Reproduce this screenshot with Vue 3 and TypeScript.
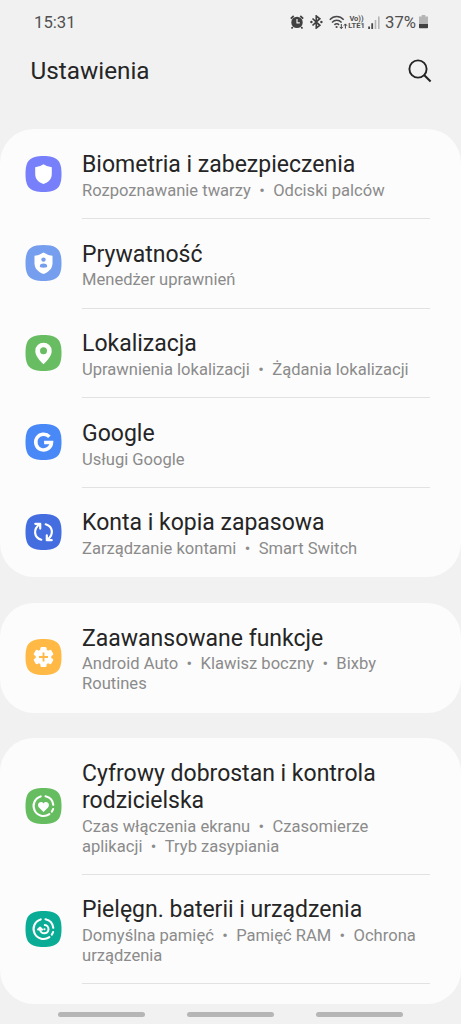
<script setup lang="ts">
type IconName = 'shield' | 'privacy' | 'location' | 'google' | 'sync' | 'advanced' | 'wellbeing' | 'care'

interface SettingsItem {
  icon: IconName
  color: string
  title: string[]
  details: string[][]
}

interface SettingsGroup {
  id: string
  clipped?: boolean
  items: SettingsItem[]
}

const groups: SettingsGroup[] = [
  {
    id: 'security',
    items: [
      { icon: 'shield', color: '#777ffa', title: ['Biometria i zabezpieczenia'], details: [['Rozpoznawanie twarzy', 'Odciski palców']] },
      { icon: 'privacy', color: '#769eee', title: ['Prywatność'], details: [['Menedżer uprawnień']] },
      { icon: 'location', color: '#68bd62', title: ['Lokalizacja'], details: [['Uprawnienia lokalizacji', 'Żądania lokalizacji']] },
      { icon: 'google', color: '#4889f7', title: ['Google'], details: [['Usługi Google']] },
      { icon: 'sync', color: '#446de0', title: ['Konta i kopia zapasowa'], details: [['Zarządzanie kontami', 'Smart Switch']] },
    ],
  },
  {
    id: 'advanced',
    items: [
      { icon: 'advanced', color: '#ffb944', title: ['Zaawansowane funkcje'], details: [['Android Auto', 'Klawisz boczny', 'Bixby'], ['Routines']] },
    ],
  },
  {
    id: 'device',
    clipped: true,
    items: [
      { icon: 'wellbeing', color: '#66bd60', title: ['Cyfrowy dobrostan i kontrola', 'rodzicielska'], details: [['Czas włączenia ekranu', 'Czasomierze'], ['aplikacji', 'Tryb zasypiania']] },
      { icon: 'care', color: '#0bac95', title: ['Pielęgn. baterii i urządzenia'], details: [['Domyślna pamięć', 'Pamięć RAM', 'Ochrona'], ['urządzenia']] },
    ],
  },
]
</script>

<template>
  <main class="screen">
    <header class="status">
      <span class="clock">15:31</span>
      <div class="indicators">
        <svg class="alarm" viewBox="0 0 14 14" width="14" height="14">
          <circle cx="7" cy="7.4" r="5.7" fill="#404040" />
          <path d="M.8 3.6 3.7 1M13.2 3.6 10.3 1M2.8 12l-1.3 1.5M11.2 12l1.3 1.5" stroke="#404040" stroke-width="1.7" />
          <path d="M7 4v3.8h2.8" fill="none" stroke="#f1f1f1" stroke-width="1.2" />
        </svg>
        <svg class="bluetooth" viewBox="0 0 13 14" width="13" height="14">
          <path d="m2.5 3.5 7.3 6.8L6.3 13V1l3.5 2.7-7.3 6.8" fill="none" stroke="#404040" stroke-width="1.7" />
          <circle cx="1.4" cy="7" r="1.2" fill="#404040" />
          <circle cx="11.4" cy="7" r="1.2" fill="#404040" />
        </svg>
        <svg class="wifi" viewBox="0 0 19 15" width="19" height="15">
          <g fill="none" stroke="#484848" stroke-width="1.5">
            <path d="M.8 4.7C4.8.4 10.6.4 14.7 4.7" />
            <path d="M3 7.4c2.9-3 6.8-3 9.6 0" />
            <path d="M5.4 9.9c1.5-1.5 3.2-1.5 4.7 0" />
          </g>
          <circle cx="7.6" cy="12" r="1.1" fill="#484848" />
          <path d="M12.3 9v4.5M10.8 11.9l1.5 1.7 1.5-1.7M16.4 13.5V9m-1.5 1.7 1.5-1.8 1.5 1.8" fill="none" stroke="#404040" stroke-width="1" />
        </svg>
        <div class="volte"><span>Vo))</span><span>LTE1</span></div>
        <svg class="signal" viewBox="0 0 12 13" width="12" height="13">
          <path d="M1.1 10.5v2.5M4.2 7.2V13" stroke="#484848" stroke-width="1.8" />
          <path d="M7.5 4v9M10.8.5V13" stroke="#b4b4b4" stroke-width="1.6" />
        </svg>
        <span class="percent">37%</span>
        <svg class="battery" viewBox="0 0 9 14" width="9" height="14">
          <path d="M2.7 0h3.6v1.5H9v8H0v-8h2.7z" fill="#b5b5b5" />
          <path d="M0 9h9v3.5q0 .8-.8.8H.8q-.8 0-.8-.8z" fill="#404040" />
        </svg>
      </div>
    </header>

    <div class="toolbar">
      <h1>Ustawienia</h1>
      <svg class="search" viewBox="0 0 24 24" width="24" height="24">
        <circle cx="10" cy="10" r="8.6" fill="none" stroke="#242424" stroke-width="1.9" />
        <path d="m16.1 16.1 6.5 6.5" stroke="#242424" stroke-width="2.1" />
      </svg>
    </div>

    <section v-for="group in groups" :key="group.id" class="card" :class="{ clipped: group.clipped }">
      <article v-for="item in group.items" :key="item.icon" class="row">
        <svg class="icon" viewBox="0.5 0 36 36" width="36" height="36">
          <path d="M18 0C31.5 0 36 4.5 36 18S31.5 36 18 36 0 31.5 0 18 4.5 0 18 0Z" :fill="item.color" />
          <path v-if="item.icon === 'shield'" d="M18 8.2q4 2.8 8.3 3V18c0 5.2-3.3 8.3-8.3 10-5-1.7-8.3-4.8-8.3-10v-6.8q4.3-.2 8.3-3Z" fill="#fff" />
          <template v-else-if="item.icon === 'privacy'">
            <path d="M18 7.5q4.5 3 9 3.2v7.5c0 5.2-3.5 8.7-9 10.8-5.5-2.1-9-5.6-9-10.8v-7.5q4.5-.2 9-3.2Z" fill="#fff" />
            <circle cx="18" cy="14.6" r="2.2" :fill="item.color" />
            <path d="M14.4 22v-1.2c0-3.2 7.2-3.2 7.2 0V22q-3.6 1.5-7.2 0Z" :fill="item.color" />
          </template>
          <template v-else-if="item.icon === 'location'">
            <path d="M18 7.7a8.2 8.2 0 0 1 8.2 8.2c0 5.2-4.8 9.8-8.2 13.3-3.4-3.5-8.2-8.1-8.2-13.3A8.2 8.2 0 0 1 18 7.7Z" fill="#fff" />
            <circle cx="18" cy="15.8" r="3.5" :fill="item.color" />
          </template>
          <path v-else-if="item.icon === 'google'" d="M23.9 12.7A7.9 7.9 0 1 0 26 18.4h-7.4" fill="none" stroke="#fff" stroke-width="3.5" />
          <g v-else-if="item.icon === 'sync'" fill="none" stroke="#fff" stroke-width="2.2" stroke-linecap="round" stroke-linejoin="round">
            <path d="M15.8 25.7c-7.4-2.3-8.4-10.3-1.7-15.5M9.8 9.8h4.9v4.8" />
            <path d="M20.2 10.3c7.4 2.3 8.4 10.3 1.7 15.5M26.2 26.2h-4.9v-4.8" />
          </g>
          <template v-else-if="item.icon === 'advanced'">
            <circle cx="18" cy="18" r="7.9" fill="#fff" />
            <g fill="#fff">
              <rect v-for="angle in [0, 60, 120]" :key="angle" x="14.9" y="7.9" width="6.2" height="20.2" rx="1.4" :transform="`rotate(${angle} 18 18)`" />
            </g>
            <path d="M18 13.5v9M13.5 18h9" :stroke="item.color" stroke-width="1.9" />
          </template>
          <template v-else>
            <g fill="none" stroke="#fff" stroke-width="2.1" stroke-linecap="round">
              <path d="M15.2 8.4a10 10 0 1 0 8.7 17.7" />
              <path d="M20 8.2a10 10 0 0 1 7.8 8.6" />
              <path d="M27.6 21a10 10 0 0 1-1.3 2.6" />
            </g>
            <path v-if="item.icon === 'wellbeing'" d="m18 24-4.3-4.3c-3.4-3.6 1.6-8 4.3-4.3 2.7-3.7 7.7.7 4.3 4.3Z" fill="#fff" />
            <g v-else fill="none" stroke="#fff" stroke-width="2" stroke-linecap="round" stroke-linejoin="round">
              <path d="M19.3 14a4.2 4.2 0 1 1-4.7 4.5" />
              <path d="m12.5 18.6 2.2-2 2 2Z" fill="#fff" />
              <path d="M18.8 18.2h.2" />
            </g>
          </template>
        </svg>
        <div class="copy">
          <h2><span v-for="line in item.title" :key="line" class="line">{{ line }}</span></h2>
          <p>
            <span v-for="(line, lineIndex) in item.details" :key="lineIndex" class="line">
              <template v-for="(part, index) in line" :key="part"><span v-if="index > 0" class="dot">•</span>{{ part }}</template>
            </span>
          </p>
        </div>
      </article>
    </section>

    <nav class="gestures"><i></i><i></i><i></i></nav>
  </main>
</template>

<style>
body {
  margin: 0;
  background: #f1f1f1;
}
</style>

<style scoped>
.screen {
  display: flex;
  flex-direction: column;
  width: 461px;
  height: 1024px;
  overflow: hidden;
  background: #f1f1f1;
  color: #252525;
  font-family: Roboto, "Noto Sans", sans-serif;
}

.status {
  display: flex;
  flex: none;
  align-items: center;
  justify-content: space-between;
  height: 44px;
  padding: 0 33px 0 34px;
  color: #505050;
  font-size: 16.7px;
}

.indicators {
  display: flex;
  align-items: center;
}

.bluetooth { margin-left: 6px; }
.wifi { margin-left: 6px; }

.volte {
  display: flex;
  flex-direction: column;
  align-items: center;
  width: 17px;
  font-size: 7.5px;
  font-weight: 700;
  line-height: 7px;
}

.signal { margin-left: 3px; }
.percent { margin-left: 5px; }
.battery { margin-left: 3px; }

.toolbar {
  display: flex;
  flex: none;
  align-items: center;
  justify-content: space-between;
  height: 53px;
  padding: 0 29px 0 30.5px;
  margin-bottom: 32px;
}

h1 {
  margin: 0;
  font-size: 24.3px;
  font-weight: 400;
}

.card {
  flex: none;
  padding-top: 0.3px;
  margin-bottom: 25.2px;
  border-radius: 34px;
  background: #fcfcfc;
}

.clipped {
  padding-bottom: 20.1px;
  margin-bottom: 0;
}

.row {
  display: flex;
  align-items: center;
  padding: 0 31px 0 25.5px;
}

.icon {
  flex: none;
  margin: 0 20.5px 1.2px 0;
  overflow: visible;
}

.copy {
  flex: 1;
  box-sizing: border-box;
  padding: 21.6px 0 17.15px;
  border-bottom: 1px solid #e2e2e2;
}

.card:not(.clipped) .row:last-child .copy {
  border-color: transparent;
}

.line {
  display: block;
  white-space: nowrap;
}

h2 {
  margin: 0;
  font-size: 23px;
  font-weight: 400;
  line-height: 27px;
}

p {
  margin: 2.9px 0 0;
  color: #8b8b8b;
  font-size: 16.57px;
  line-height: 20px;
}

.dot { margin: 0 8.4px; }

.gestures {
  display: flex;
  flex: none;
  justify-content: space-between;
  padding: 0 58px;
  margin-top: 7.5px;
}

.gestures i {
  width: 87px;
  height: 5px;
  border-radius: 3px;
  background: #b6b6b6;
}
</style>
